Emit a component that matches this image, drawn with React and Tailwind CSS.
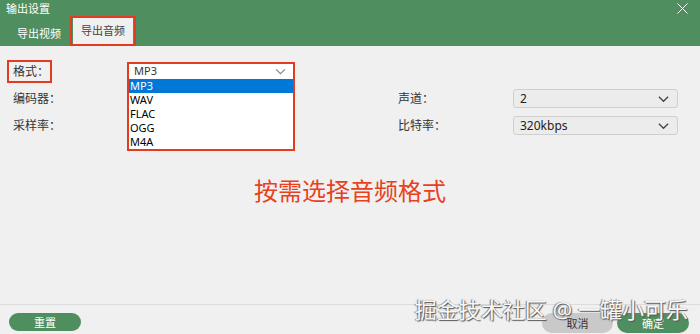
const FONT = 'font-["Noto_Sans","Noto_Sans_CJK_SC",sans-serif]';

const formats = ['MP3', 'WAV', 'FLAC', 'OGG', 'M4A'];

function Chevron({ className }) {
  return (
    <svg className={className} viewBox="0 0 12 8" fill="none" stroke="currentColor" strokeWidth="1.4">
      <path d="M1 1.5l5 5 5-5" />
    </svg>
  );
}

function Select({ value }) {
  return (
    <div className="w-[165px] h-[19px] rounded-[3px] border border-[#cfcfcf] bg-[#ececec] flex items-center justify-between pl-[6px] pr-[8px] text-[12px] text-[#222]">
      <span>{value}</span>
      <Chevron className="w-[11px] h-[8px] text-[#444]" />
    </div>
  );
}

export default function App() {
  return (
    <div className={`w-[700px] h-[334px] bg-[#f0f0f0] relative overflow-hidden flex flex-col ${FONT}`}>
      {/* header */}
      <div className="h-[46px] bg-[#4f8f5f] flex flex-col shrink-0">
        <div className="h-[17px] flex items-center justify-between pl-[6px] pr-[12px]">
          <span className="text-[11px] text-white leading-none">输出设置</span>
          <svg className="w-[11px] h-[11px] text-white" viewBox="0 0 11 11" stroke="currentColor" strokeWidth="1">
            <path d="M0.5 0.5l10 10M10.5 0.5l-10 10" />
          </svg>
        </div>
        <div className="flex-1 flex items-end">
          <div className="ml-[17px] mb-[7px] text-[11px] text-white leading-none">导出视频</div>
          <div className="ml-[9px] h-[30px] w-[66px] border-2 border-[#e33b1f] flex items-end">
            <div className="w-full h-[26px] bg-[#f0f0f0] flex items-center justify-center text-[11px] text-[#444] mx-[1px] mt-[1px]">
              导出音频
            </div>
          </div>
        </div>
      </div>

      {/* form */}
      <div className="pt-[12px] text-[12px] text-[#333]">
        <div className="h-[27px] flex items-center pl-[13px]">
          <div className="w-[117px]">
            <span className="-ml-[6px] inline-flex h-[23px] items-center border-2 border-[#e33b1f] pl-[4px] pr-[1px]">格式：</span>
          </div>
          <div className="relative w-[162px] h-[15px]">
            <div className="absolute -top-[2px] -left-[3px] w-[168px] border-2 border-[#e33b1f] bg-white z-10">
              <div className="h-[15px] flex items-center justify-between pl-[5px] pr-[7px] text-[11px] text-[#333]">
                <span>MP3</span>
                <Chevron className="w-[11px] h-[7px] text-[#888]" />
              </div>
              {formats.map((f, i) => (
                <div
                  key={f}
                  className={`h-[14px] flex items-center pl-[1px] text-[11px] ${i === 0 ? 'bg-[#0078d7] text-white' : 'text-black'}`}
                >
                  {f}
                </div>
              ))}
            </div>
          </div>
        </div>
        <div className="h-[27px] flex items-center pl-[13px]">
          <div className="w-[117px]">编码器：</div>
          <div className="w-[162px]" />
          <div className="ml-[106px] w-[115px]">声道：</div>
          <Select value="2" />
        </div>
        <div className="h-[27px] flex items-center pl-[13px]">
          <div className="w-[117px]">采样率：</div>
          <div className="w-[162px]" />
          <div className="ml-[106px] w-[115px]">比特率：</div>
          <Select value="320kbps" />
        </div>
      </div>

      {/* annotation */}
      <div className="flex-1 flex justify-center pt-[37px]">
        <span className="text-[24px] leading-[30px] text-[#e8411e]">按需选择音频格式</span>
      </div>

      {/* footer */}
      <div className="h-[30px] border-t border-[#dcdcdc] flex items-start justify-between pt-[8px] pl-[9px] pr-[11px] shrink-0">
        <button className="w-[72px] h-[18px] rounded-full bg-[#4f8f5f] text-white text-[11px] leading-none">重置</button>
        <div className="flex gap-[4px]">
          <button className="w-[71px] h-[20px] rounded-full bg-[#c9c9c9] text-[#333] text-[11px] leading-none">取消</button>
          <button className="w-[72px] h-[20px] rounded-full bg-[#4f8f5f] text-white text-[11px] leading-none">确定</button>
        </div>
      </div>

      {/* watermark */}
      <div className="absolute right-[12px] top-[296px] text-[22px] leading-[26px] text-[#f7f7f7] [text-shadow:1px_1px_1px_#555,-1px_0_1px_#777] pointer-events-none">
        掘金技术社区 @ 一罐小可乐
      </div>
    </div>
  );
}
